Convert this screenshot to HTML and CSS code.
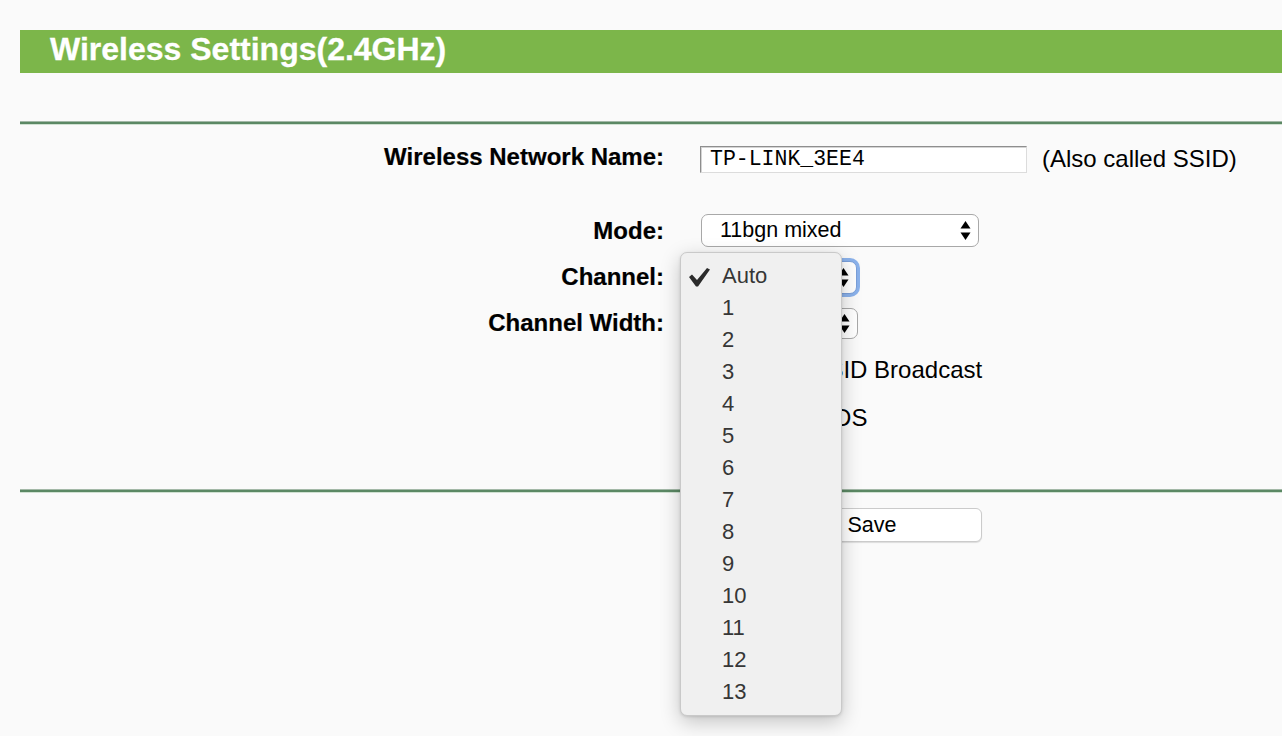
FILE: index.html
```html
<!DOCTYPE html>
<html>
<head>
<meta charset="utf-8">
<title>Wireless Settings</title>
<link rel="stylesheet" href="styles.css">
</head>
<body>
<div class="page">
  <div class="banner">Wireless Settings(2.4GHz)</div>
  <div class="rule rule-top"></div>

  <div class="form">
    <div class="row row-name">
      <span class="lbl lbl-name">Wireless Network Name:</span>
      <div class="ctl">
        <div class="textbox">TP-LINK_3EE4</div>
        <span class="note">(Also called SSID)</span>
      </div>
    </div>

    <div class="row row-mode">
      <span class="lbl">Mode:</span>
      <div class="ctl">
        <div class="select select-mode">
          <span>11bgn mixed</span>
          <svg class="arrows" width="11" height="19" viewBox="0 0 11 19"><polygon points="0.5,7.5 5.5,0 10.5,7.5" fill="#000"/><polygon points="0.5,11.5 10.5,11.5 5.5,19" fill="#000"/></svg>
        </div>
      </div>
    </div>

    <div class="row row-channel">
      <span class="lbl">Channel:</span>
      <div class="ctl">
        <div class="select select-channel focus">
          <span>Auto</span>
          <svg class="arrows" width="11" height="19" viewBox="0 0 11 19"><polygon points="0.5,7.5 5.5,0 10.5,7.5" fill="#000"/><polygon points="0.5,11.5 10.5,11.5 5.5,19" fill="#000"/></svg>
        </div>
      </div>
    </div>

    <div class="row row-width">
      <span class="lbl">Channel Width:</span>
      <div class="ctl">
        <div class="select select-width">
          <span>Auto</span>
          <svg class="arrows" width="11" height="19" viewBox="0 0 11 19"><polygon points="0.5,7.5 5.5,0 10.5,7.5" fill="#000"/><polygon points="0.5,11.5 10.5,11.5 5.5,19" fill="#000"/></svg>
        </div>
      </div>
    </div>

    <div class="row row-check">
      <span class="lbl"></span>
      <div class="ctl">
        <span class="checkbox checked"></span>
        <span class="check-text">Enable SSID Broadcast</span>
      </div>
    </div>

    <div class="row row-check">
      <span class="lbl"></span>
      <div class="ctl">
        <span class="checkbox"></span>
        <span class="check-text">Enable WDS</span>
      </div>
    </div>
  </div>

  <div class="rule rule-bottom"></div>

  <div class="actions">
    <button class="btn">Save</button>
  </div>
</div>

<div class="popup">
  <div class="item selected">
    <svg class="tick" width="22" height="20" viewBox="0 0 22 20"><polygon points="1,10 4,7.5 9,13 19,1 22,2.5 10,19.5 8,19.5" fill="#2b2b2b"/></svg>
    Auto
  </div>
  <div class="item">1</div>
  <div class="item">2</div>
  <div class="item">3</div>
  <div class="item">4</div>
  <div class="item">5</div>
  <div class="item">6</div>
  <div class="item">7</div>
  <div class="item">8</div>
  <div class="item">9</div>
  <div class="item">10</div>
  <div class="item">11</div>
  <div class="item">12</div>
  <div class="item">13</div>
</div>
</body>
</html>
```

FILE: styles.css
```css
html, body {
  margin: 0;
  padding: 0;
  background: #fafafa;
}

body {
  font-family: "Liberation Sans", Arial, sans-serif;
  color: #000;
  width: 1282px;
  height: 736px;
  overflow: hidden;
  position: relative;
}

.page {
  padding: 30px 0 0 20px;
}

.banner {
  height: 43px;
  box-sizing: border-box;
  background: #7cb64a;
  color: #fff;
  font-weight: bold;
  font-size: 32px;
  line-height: 39px;
  padding: 0 0 4px 30px;
  white-space: nowrap;
  -webkit-text-stroke: 0.3px #fff;
}

.rule {
  height: 2px;
  background: #5b8864;
  border-top: 1px solid #a3b8a7;
  border-bottom: 1px solid #d0e1d2;
}

.rule-top {
  margin-top: 48px;
}

.rule-bottom {
  margin-top: 47px;
}

.form {
  display: flex;
  flex-direction: column;
}

.row {
  display: grid;
  grid-template-columns: 644px 1fr;
  column-gap: 36px;
  align-items: center;
}

.row-name {
  height: 50px;
  margin-top: 9px;
}

.row-mode {
  height: 47px;
  margin-top: 23px;
}

.row-channel,
.row-width {
  height: 46px;
}

.row-check {
  height: 48px;
}

.lbl {
  text-align: right;
  font-weight: bold;
  font-size: 24px;
  white-space: nowrap;
  -webkit-text-stroke: 0.2px #000;
}

.lbl-name {
  margin-bottom: 4px;
}

.ctl {
  display: flex;
  align-items: center;
}

.textbox {
  width: 327px;
  height: 27px;
  box-sizing: border-box;
  background: #fff;
  border: 1px solid;
  border-color: #8e8e8e #dcdcdc #dcdcdc #8e8e8e;
  box-shadow: inset 1px 1px 0 #d4d4d4;
  font-family: "Courier New", "Liberation Mono", monospace;
  font-size: 21.5px;
  line-height: 25px;
  padding-left: 9px;
  color: #000;
}

.note {
  margin-left: 15px;
  font-size: 24px;
  white-space: nowrap;
}

.select {
  display: flex;
  align-items: center;
  justify-content: space-between;
  height: 33px;
  box-sizing: border-box;
  border: 1.5px solid #a8a8a8;
  border-radius: 7px;
  background: #fff;
  padding: 0 7px 0 18px;
  font-size: 21.5px;
  margin-left: 1px;
}

.select-mode {
  width: 278px;
}

.select-channel {
  width: 156px;
}

.select-width {
  width: 157px;
  height: 31px;
}

.focus {
  box-shadow: 0 0 0 3px rgba(102, 153, 230, 0.75);
  border-color: #7a9fd9;
}

.checkbox {
  width: 16px;
  height: 16px;
  box-sizing: border-box;
  border: 1px solid #999;
  border-radius: 3px;
  background: #fff;
  margin-left: 6px;
}

.check-text {
  margin-left: 8px;
  font-size: 24px;
  white-space: nowrap;
}

.actions {
  padding-top: 15px;
}

.btn {
  margin-left: 742px;
  width: 220px;
  height: 34px;
  box-sizing: border-box;
  background: #fff;
  border: 1px solid #cbcbcb;
  border-radius: 6px;
  box-shadow: 0 1px 1px rgba(0, 0, 0, 0.12);
  font-family: "Liberation Sans", Arial, sans-serif;
  font-size: 21.5px;
  color: #000;
  padding: 0;
  line-height: 32px;
}

.popup {
  position: absolute;
  left: 680px;
  top: 252px;
  width: 162px;
  height: 464px;
  box-sizing: border-box;
  padding: 7px 0;
  background: #f0f0f0;
  border: 1px solid #c9c9c9;
  border-radius: 7px;
  box-shadow: 0 6px 20px rgba(0, 0, 0, 0.22), 0 1px 3px rgba(0, 0, 0, 0.12);
}

.item {
  position: relative;
  height: 32px;
  line-height: 32px;
  padding-left: 41px;
  font-size: 22px;
  color: #363636;
}

.tick {
  position: absolute;
  left: 7px;
  top: 7px;
}
```
